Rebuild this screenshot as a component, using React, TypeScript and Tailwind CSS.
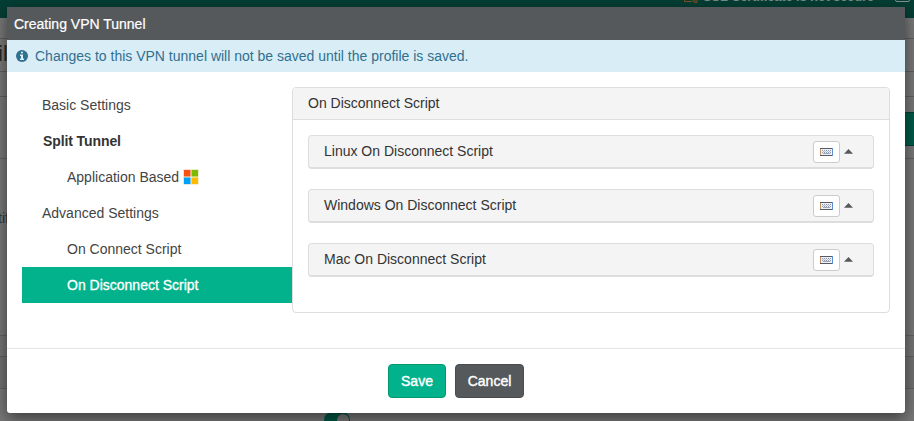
import React from "react";

const nav = [
  { label: "Basic Settings", cls: "pl-5 text-[#444]" },
  { label: "Split Tunnel", cls: "pl-[21px] font-bold text-[#333] tracking-[-0.1px]" },
  { label: "Application Based", cls: "pl-[45px] text-[#444]", windows: true },
  { label: "Advanced Settings", cls: "pl-5 text-[#444]" },
  { label: "On Connect Script", cls: "pl-[45px] text-[#444]" },
  { label: "On Disconnect Script", cls: "pl-[45px] bg-[#02b28c] text-white [-webkit-text-stroke:0.3px_white]" },
];

const scripts = ["Linux On Disconnect Script", "Windows On Disconnect Script", "Mac On Disconnect Script"];

function WindowsLogo() {
  return (
    <svg width="16" height="16" viewBox="0 0 16 16" className="ml-1">
      <rect width="16" height="16" fill="#f6f2e6" />
      <rect x="0.9" y="0.9" width="6.6" height="6.6" fill="#f65314" />
      <rect x="8.5" y="0.9" width="6.6" height="6.6" fill="#7cbb00" />
      <rect x="0.9" y="8.5" width="6.6" height="6.6" fill="#00a1f1" />
      <rect x="8.5" y="8.5" width="6.6" height="6.6" fill="#ffbb00" />
    </svg>
  );
}

function InfoIcon() {
  return (
    <svg width="12" height="12" viewBox="0 0 12 12">
      <circle cx="6" cy="6" r="6" fill="#31708f" />
      <path d="M5 1.7h2v1.6H5zM4 4.5h3v4h1V10H4V8.5h1V6H4z" fill="#d9edf7" />
    </svg>
  );
}

function KeyboardIcon() {
  return (
    <svg width="13" height="8" viewBox="0 0 13 8" shapeRendering="crispEdges">
      <rect width="13" height="8" fill="#59595f" />
      <rect x="0" y="1" width="1" height="6" fill="#c09060" />
      <rect x="12" y="0" width="1" height="8" fill="#5c8fd0" />
      <rect x="1" y="1" width="11" height="6" fill="#e9f1fb" />
      <path d="M2 2.5h9M2 4.5h9" stroke="#9097ad" strokeDasharray="1 1" />
      <path d="M3 3.5h8" stroke="#c5b8ba" strokeDasharray="1 1" />
      <path d="M3 5.5h7" stroke="#a5a5b4" />
    </svg>
  );
}

function Backdrop() {
  return (
    <div className="absolute inset-0 overflow-hidden bg-[#777]">
      <div className="relative h-[18px] bg-[#053e34]">
        <svg className="absolute left-[683px] top-0" width="16" height="4" viewBox="0 0 16 4" fill="none" stroke="#8a4f1c">
          <path d="M1.5 0v1.5H9M10 0a2.5 2.5 0 0 0 4 2.2V0M12 0v2" />
        </svg>
        <span className="absolute left-[703px] -top-[11px] whitespace-nowrap text-[13px] leading-[15px] font-bold tracking-[-0.18px] text-[#7c8b87]">
          SSL Certificate is not secure
        </span>
        <div className="absolute left-[895px] -top-[10px] h-3 w-[15px] rounded-[2px] border border-[#83928e]" />
      </div>
      <div className="h-[21px] border-b border-[#5f5f5f]" />
      <div className="h-[33px] border-b border-[#5f5f5f]" />
      <div className="h-[25px] border-b border-[#5f5f5f]" />
      <div className="mt-[15px] ml-[500px] h-[34px] border-y border-[#003f32] bg-[#015947]" />
      <div className="h-[13px] border-b border-[#616161]" />
      <div className="h-[177px] border-b border-[#616161]" />
      <div className="h-[21px] border-b border-[#616161] bg-[#747474]" />
      <div className="h-8 border-b border-[#616161] bg-[#707070]" />
      <span className="absolute -left-[2px] top-[40px] text-[22px] leading-7 text-[#272727]">il</span>
      <span className="absolute -left-[2px] top-[209px] text-[14px] leading-[18px] text-[#30343b]">tif</span>
      <div className="absolute left-[324px] top-[412px] h-4 w-[26px] rounded-full bg-[#015643]">
        <div className="ml-[13px] mt-[2px] h-3 w-3 rounded-full bg-[#777]" />
      </div>
    </div>
  );
}

export default function App() {
  return (
    <div className="relative h-[421px] w-[914px] overflow-hidden p-[7px] font-['Liberation_Sans',Arial,sans-serif] text-[14px] leading-5">
      <Backdrop />
      <div className="relative flex h-[406px] w-[898px] flex-col rounded-b-[3px] bg-white shadow-[0_5px_15px_rgba(0,0,0,0.5)]">
        <header className="flex h-[33px] shrink-0 items-center bg-[#56595b] pl-[7px] text-white [-webkit-text-stroke:0.2px_white]">
          Creating VPN Tunnel
        </header>
        <div className="flex h-8 shrink-0 items-center gap-[7px] bg-[#d9edf7] pl-[9px] text-[#31708f]">
          <InfoIcon />
          <span>Changes to this VPN tunnel will not be saved until the profile is saved.</span>
        </div>
        <main className="flex grow px-[15px] pt-[15px]">
          <nav className="w-[270px]">
            {nav.map((n) => (
              <div key={n.label} className={`flex h-9 items-center ${n.cls}`}>
                {n.label}
                {n.windows && <WindowsLogo />}
              </div>
            ))}
          </nav>
          <section className="h-[226px] w-[598px] rounded border border-[#ddd]">
            <h2 className="flex h-8 items-center rounded-t-[3px] border-b border-[#ddd] bg-[#f4f4f4] pb-px pl-[15px] text-[#333]">
              On Disconnect Script
            </h2>
            <div className="flex flex-col gap-5 p-[15px]">
              {scripts.map((s) => (
                <div
                  key={s}
                  className="flex h-[34px] items-start rounded border border-b-2 border-[#ddd] bg-[#f4f4f4] pt-[5px] pr-5 pl-[15px] text-[#333]"
                >
                  <span className="grow">{s}</span>
                  <button className="mr-[4px] flex h-[22px] w-[27px] items-center justify-center rounded-[3px] border border-[#ccc] bg-white">
                    <KeyboardIcon />
                  </button>
                  <svg className="mt-2" width="9" height="5" viewBox="0 0 9 5">
                    <path d="M4.5 0L9 4.8H0z" fill="#56595b" />
                  </svg>
                </div>
              ))}
            </div>
          </section>
        </main>
        <footer className="flex h-[65px] shrink-0 justify-center gap-[9px] border-t border-[#e5e5e5] pt-[15px]">
          <button className="h-[34px] w-[58px] rounded border border-[#02996f] bg-[#02b28c] text-white [-webkit-text-stroke:0.4px_white]">
            Save
          </button>
          <button className="h-[34px] w-[69px] rounded border border-[#494c4e] bg-[#56595b] text-white [-webkit-text-stroke:0.4px_white]">
            Cancel
          </button>
        </footer>
      </div>
    </div>
  );
}
